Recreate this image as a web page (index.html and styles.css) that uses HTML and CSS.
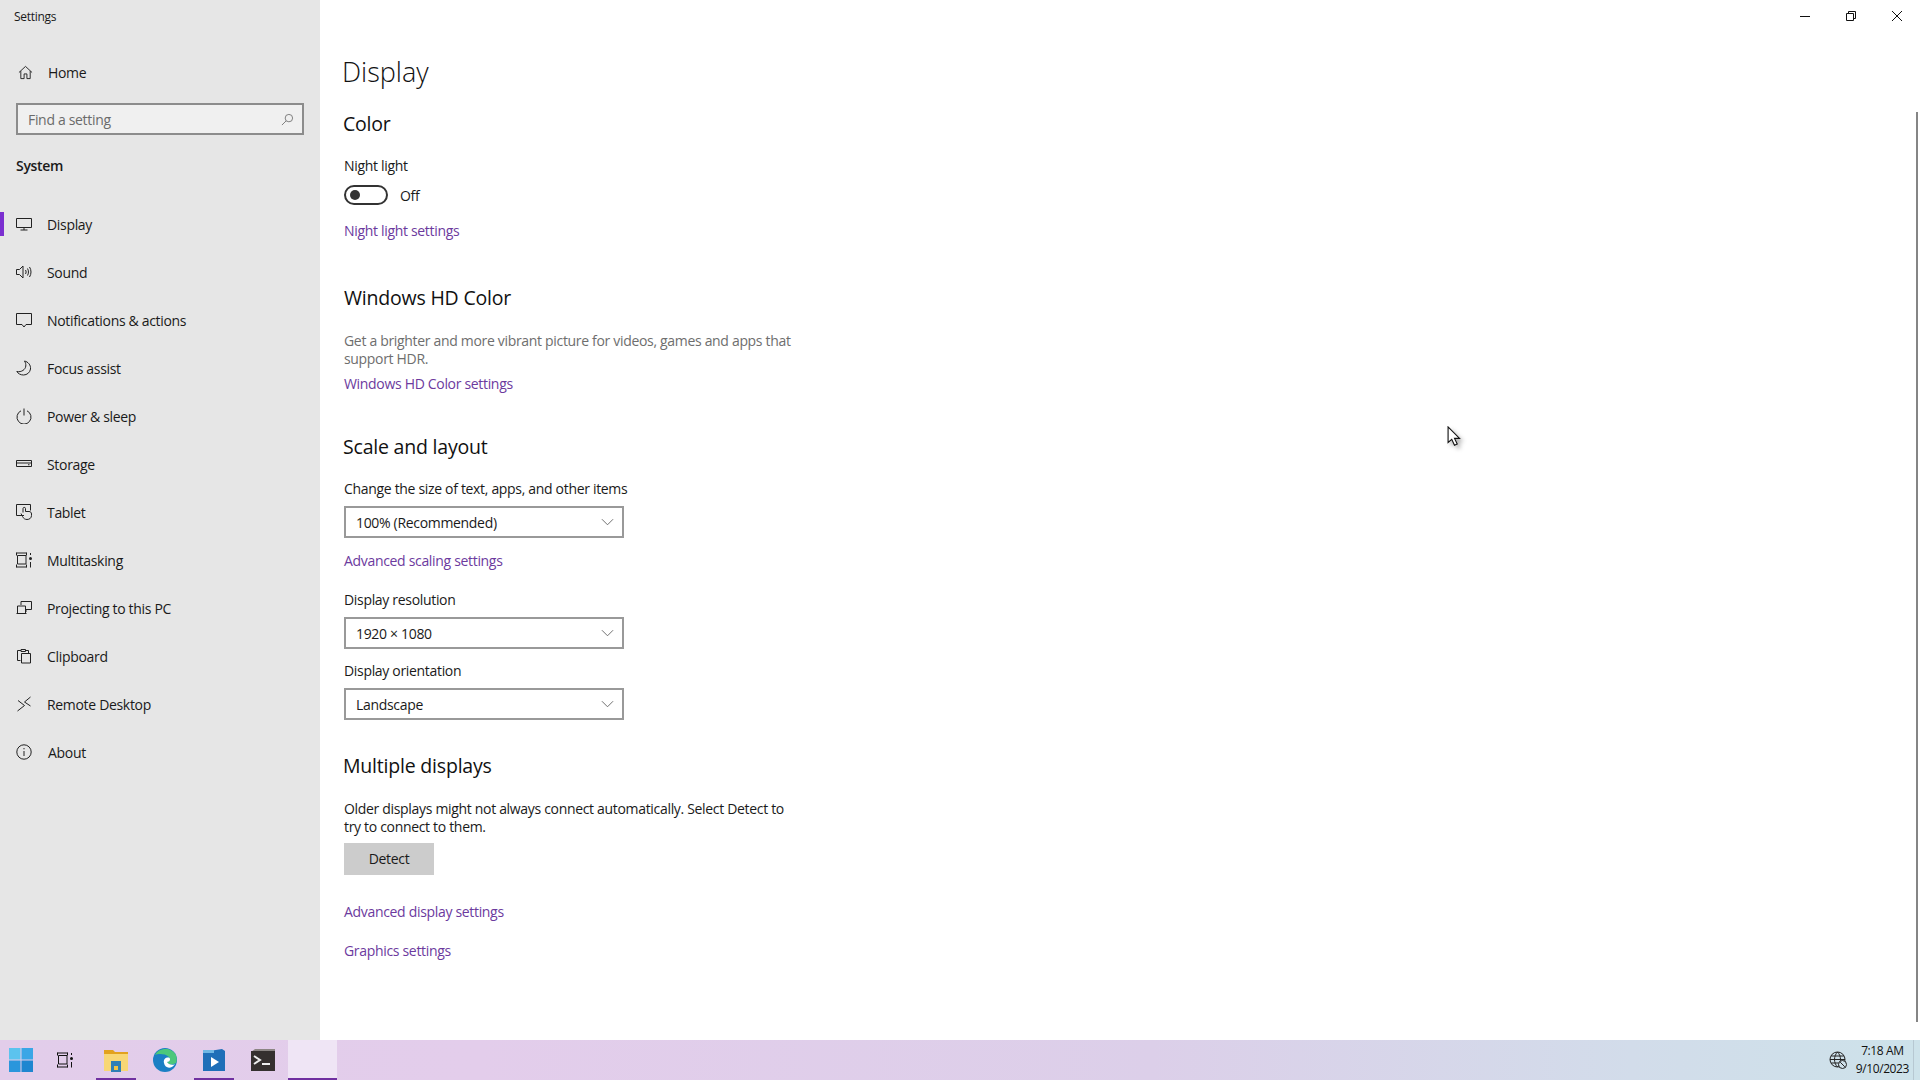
FILE: index.html
```html
<!DOCTYPE html>
<html lang="en">
<head>
<meta charset="utf-8">
<title>Settings</title>
<link rel="stylesheet" href="styles.css">
</head>
<body>
<div class="window">
  <aside class="sidebar">
    <div class="app-title">Settings</div>
    <a class="home-row">
      <svg class="icon" viewBox="0 0 16 16"><path d="M1 8 8 1.500 15 8M3 6.500V14.500H6.500V9.500H9.500V14.500H13V6.500"/></svg>
      <span>Home</span>
    </a>
    <div class="search"><span>Find a setting</span>
      <svg class="search-icon" viewBox="0 0 14 14"><circle cx="8.500" cy="5.500" r="4"/><path d="M5.500 8.500 1 13"/></svg>
    </div>
    <div class="group">System</div>
    <nav class="nav">
      <a class="nav-item active"><svg class="icon" viewBox="0 0 16 16"><path d="M.5 2.500H15.500V11.500H.5ZM8 11.500V14M4.500 14H11.500"/></svg><span>Display</span></a>
      <a class="nav-item"><svg class="icon" viewBox="0 0 16 16"><path d="M.5 5.500H3.500L7 2V14L3.500 10.500H.5ZM9.500 6C10.300 7.300 10.300 8.700 9.500 10M11.500 4.500C12.800 6.500 12.800 9.500 11.500 11.500M13.500 3C15.500 6 15.500 10 13.500 13"/></svg><span>Sound</span></a>
      <a class="nav-item"><svg class="icon" viewBox="0 0 16 16"><path d="M.5 1.500H15.500V12.500H10L8 15 6 12.500H.5Z"/></svg><span>Notifications &amp; actions</span></a>
      <a class="nav-item"><svg class="icon" viewBox="0 0 16 16"><path d="M8.500 1C12 1.800 15 5 14.500 9 14 12.500 11 15 7.500 15 4.500 15 2 13.500.8 11.500 5.500 12.500 9.500 9.500 9.800 6 10 4.200 9.500 2.500 8.500 1Z"/></svg><span>Focus assist</span></a>
      <a class="nav-item"><svg class="icon" viewBox="0 0 16 16"><path d="M5 2.800A7 7 0 1 0 11 2.800M8 .5V7.500"/></svg><span>Power &amp; sleep</span></a>
      <a class="nav-item"><svg class="icon" viewBox="0 0 16 16"><path d="M.5 4.500H15.500V10.500H.5ZM.5 7H15.500M12 8.750H13.500"/></svg><span>Storage</span></a>
      <a class="nav-item"><svg class="icon" viewBox="0 0 16 16"><path d="M8 11.500H.5V.5H14.500V6.500M7 8.500V4.500C7 3 9.500 3 9.500 4.500V7.500H13C14.500 7.500 15.500 8.500 15.500 10V11.500C15.500 14 13.500 15.500 11 15.500 9 15.500 7.500 14.500 6.500 12.500L5 9.500"/></svg><span>Tablet</span></a>
      <a class="nav-item"><svg class="icon" viewBox="0 0 16 16"><path d="M.5 1H10.500M.5 15H10.500M.5 3.500V.5M10.500 3.500V.5M.5 12.500V15.500M10.500 12.500V15.500M1.500 3.500H10V12H1.500ZM14.500 1V3M14.500 10V15.500"/><circle class="solid" cx="14.500" cy="6.500" r="1.500"/></svg><span>Multitasking</span></a>
      <a class="nav-item"><svg class="icon" viewBox="0 0 16 16"><path d="M5 5V1.500H15.500V9.500H10M10 9.500V12M1.500 6H9.500V13.500H1.500ZM.5 13.500H10.500"/></svg><span>Projecting to this PC</span></a>
      <a class="nav-item"><svg class="icon" viewBox="0 0 16 16"><path d="M4.500 12.500H1.500V2.500H5M9.500 2.500H12.500V5M5 3.500V1.500H9.500V3.500ZM5.500 5.500H14.500V15H5.500Z"/></svg><span>Clipboard</span></a>
      <a class="nav-item"><svg class="icon" viewBox="0 0 16 16"><path d="M1.500 15 8.500 9.500 2 4.500M14.500 1 8.500 6 14.500 10"/></svg><span>Remote Desktop</span></a>
      <a class="nav-item about"><svg class="icon" viewBox="0 0 16 16"><circle cx="8" cy="8" r="7.200"/><path d="M8 7V12M8 4V5.300"/></svg><span>About</span></a>
    </nav>
  </aside>
  <main class="main">
    <h1 class="page-title">Display</h1>
    <h2 class="section-title color-title">Color</h2>
    <div class="label night-label">Night light</div>
    <div class="toggle-row"><span class="toggle"><span class="knob"></span></span><span>Off</span></div>
    <a class="link night-link">Night light settings</a>

    <h2 class="section-title hd-title">Windows HD Color</h2>
    <p class="para muted hd-text">Get a brighter and more vibrant picture for videos, games and apps that support HDR.</p>
    <a class="link hd-link">Windows HD Color settings</a>

    <h2 class="section-title scale-title">Scale and layout</h2>
    <div class="label scale-label">Change the size of text, apps, and other items</div>
    <div class="select"><span>100% (Recommended)</span><svg class="chev" viewBox="0 0 14 8"><path d="M1 1 7 7 13 1"/></svg></div>
    <a class="link scale-link">Advanced scaling settings</a>
    <div class="label res-label">Display resolution</div>
    <div class="select"><span>1920 × 1080</span><svg class="chev" viewBox="0 0 14 8"><path d="M1 1 7 7 13 1"/></svg></div>
    <div class="label orient-label">Display orientation</div>
    <div class="select"><span>Landscape</span><svg class="chev" viewBox="0 0 14 8"><path d="M1 1 7 7 13 1"/></svg></div>

    <h2 class="section-title multi-title">Multiple displays</h2>
    <p class="para multi-text">Older displays might not always connect automatically. Select Detect to try to connect to them.</p>
    <div class="button">Detect</div>
    <a class="link adv-link">Advanced display settings</a>
    <a class="link gfx-link">Graphics settings</a>
  </main>
  <div class="track"><div class="thumb"></div></div>
  <div class="caption">
    <svg class="cap" viewBox="0 0 10 10"><path d="M0 5.500H10"/></svg>
    <svg class="cap" viewBox="0 0 10 10"><path d="M.5 2.500H7.500V9.500H.5ZM2.500 2.500V.5H9.500V7.500H7.500"/></svg>
    <svg class="cap" viewBox="0 0 10 10"><path d="M0 0 10 10M10 0 0 10"/></svg>
  </div>
  <svg class="cursor" viewBox="0 0 16 24"><path d="M1 1V18L5 14.500 8 21 11 19.700 8 13.500H13.500Z"/></svg>
</div>
<footer class="taskbar">
  <div class="task-icons">
    <div class="task start"><svg class="t-icon" viewBox="0 0 24 24"><rect class="win1" x="0" y="0" width="11.500" height="11.500"/><rect class="win2" x="12.500" y="0" width="11.500" height="11.500"/><rect class="win3" x="0" y="12.500" width="11.500" height="11.500"/><rect class="win4" x="12.500" y="12.500" width="11.500" height="11.500"/></svg></div>
    <div class="task view"><svg class="t-icon tv" viewBox="0 0 16 16"><path d="M.5 1H10.500M.5 15H10.500M.5 3.500V.5M10.500 3.500V.5M.5 12.500V15.500M10.500 12.500V15.500M1.500 3.500H10V12H1.500ZM14.500 1V3M14.500 10V15.500"/><circle class="solid" cx="14.500" cy="6.500" r="1.500"/></svg></div>
    <div class="task open"><svg class="t-icon" viewBox="0 0 24 24"><path fill="#e2a21e" d="M0 2H9L11 4H24V9H0Z"/><path fill="#f8d775" d="M0 6H24V23H0Z"/><path fill="#2f7fb5" d="M7 13H17V24H7Z"/><rect fill="#f2c443" x="10" y="18" width="4" height="4"/></svg></div>
    <div class="task"><svg class="t-icon edge" viewBox="0 0 24 24"><circle fill="#1b7fc4" cx="12" cy="12" r="12"/><path fill="#4cc77b" d="M2 7C5 0 18-2 23 7 24 10 24 13 23 15 20 17 15 17 14 14 17 14 18 11 16 9 11 5 5 6 2 7Z"/><path fill="#fff" d="M11 15C10 11 13 9 16 9.500 18 11 17 14 14 14 15 16 19 18 22 16 19 21 12 21 11 15Z"/></svg></div>
    <div class="task open"><svg class="t-icon" viewBox="0 0 24 24"><path fill="#1f6fb8" d="M1 4 20 1 23 3V23H1Z"/><path fill="#6fb7e4" d="M1 2H12V5H1Z"/><path fill="#fff" d="M9 9 17 14 9 19Z"/></svg></div>
    <div class="task"><svg class="t-icon" viewBox="0 0 24 24"><path fill="#8b8583" d="M0 4 4 1H24V6H0Z"/><rect fill="#35302f" x="0" y="3" width="24" height="20"/><path class="prompt" d="M3 8 9 12 3 16"/><rect fill="#eee" x="11" y="15" width="8" height="2"/></svg></div>
    <div class="task open blank"></div>
  </div>
  <div class="tray">
    <svg class="globe" viewBox="0 0 18 18"><circle cx="8.500" cy="8.500" r="7.500"/><path d="M1 8.500H16M2 5H15M2 12H15M8.500 1C4.500 5 4.500 12 8.500 16M8.500 1C12.500 5 12.500 12 8.500 16"/><circle class="globe-badge" cx="13.500" cy="13.500" r="4"/><path d="M11.200 11.200 15.800 15.800"/></svg>
    <div class="clock"><div>7:18 AM</div><div>9/10/2023</div></div>
    <div class="show-desktop"></div>
  </div>
</footer>
</body>
</html>
```
FILE: styles.css
```css
* { box-sizing: border-box; }
html, body { margin: 0; padding: 0; }
body {
  width: 1920px; height: 1080px; overflow: hidden; background: #fff;
  font-family: "Open Sans", "Noto Sans", sans-serif; font-size: 14px; color: #1a1a1a;
  letter-spacing: -0.32px;
  display: flex; flex-direction: column;
}
a { display: block; }
.window { flex: 1; display: flex; position: relative; min-height: 0; }

.sidebar { width: 320px; background: #e6e6e6; flex: none; }
.app-title { height: 48px; padding-left: 14px; font-size: 12px; line-height: 33px; letter-spacing: -0.3px; }
.home-row { display: flex; align-items: center; height: 48px; padding-left: 18px; gap: 15px; }
.home-row .icon { width: 15px; height: 15px; }
.icon { width: 16px; height: 16px; fill: none; stroke: #222; stroke-width: 1; flex: none; }
.solid { fill: #222; stroke: none; }
.search {
  display: flex; align-items: center; justify-content: space-between;
  margin: 7px 16px 0 16px; height: 32px; padding: 0 8px 0 10px;
  background: #f0f0f0; border: 2px solid #8c8c8c; color: #6b6b6b;
}
.search-icon { width: 13px; height: 13px; fill: none; stroke: #777; stroke-width: 1; }
.group { margin: 21px 0 0 16px; height: 20px; line-height: 20px; font-weight: 600; }
.nav { margin-top: 24px; }
.nav-item { display: flex; align-items: center; height: 48px; padding-left: 16px; gap: 15px; position: relative; }
.nav-item.active::before { content: ""; position: absolute; left: 0; top: 12px; width: 4px; height: 24px; background: #7b2fd0; }
.about { gap: 16px; }

.main { flex: 1; padding: 0 0 0 24px; min-width: 0; }
.page-title { margin: 52px 0 0 -2px; font-size: 27px; line-height: 40px; height: 40px; font-weight: 300; color: #111; letter-spacing: 0; }
.section-title { font-size: 19.5px; font-weight: 400; line-height: 28px; height: 28px; margin: 0; color: #111; letter-spacing: -0.2px; }
.label, .link { height: 20px; line-height: 20px; }
.color-title { margin-top: 18px; margin-left: -1px; }
.night-label { margin-top: 18px; }
.toggle-row { display: flex; align-items: center; gap: 12px; margin-top: 9px; height: 20px; }
.toggle { width: 44px; height: 20px; border: 2px solid #333; border-radius: 10px; position: relative; display: block; }
.knob { position: absolute; left: 4px; top: 3px; width: 10px; height: 10px; border-radius: 50%; background: #333; }
.link { color: #6c3a9e; }
.night-link { margin-top: 16px; }
.hd-title { margin-top: 43px; }
.para { margin: 0; width: 450px; line-height: 18px; font-size: 14px; }
.muted { color: #6e6e6e; }
.hd-text { margin-top: 20px; }
.hd-link { margin-top: 6px; }
.scale-title { margin-top: 39px; margin-left: -1px; }
.scale-label { margin-top: 18px; }
.select {
  width: 280px; height: 32px; margin-top: 7px; border: 2px solid #999; background: #fff;
  display: flex; align-items: center; justify-content: space-between; padding: 0 8px 0 10px;
}
.chev { width: 13px; height: 8px; fill: none; stroke: #666; stroke-width: 1; }
.scale-link { margin-top: 13px; }
.res-label { margin-top: 19px; }
.orient-label { margin-top: 12px; }
.multi-title { margin-top: 32px; margin-left: -1px; }
.multi-text { margin-top: 20px; }
.button { width: 90px; height: 32px; margin-top: 7px; background: #ccc; text-align: center; line-height: 32px; }
.adv-link { margin-top: 27px; }
.gfx-link { margin-top: 19px; }

.track { width: 4px; flex: none; padding-top: 112px; }
.thumb { width: 2px; height: 910px; background: #858585; }
.caption { position: absolute; top: 11px; right: 18px; display: flex; gap: 36px; }
.cap { width: 10px; height: 10px; fill: none; stroke: #111; stroke-width: 1; display: block; }
.cursor { position: absolute; left: 1447px; top: 426px; width: 15px; height: 22px; fill: #fff; stroke: #111; stroke-width: 1.2; filter: drop-shadow(3px 3px 2px rgba(0,0,0,.3)); }

.taskbar {
  height: 40px; flex: none; display: flex; justify-content: space-between; align-items: stretch;
  background: linear-gradient(90deg, #e2cdea 0%, #e3cdeb 25%, #dccfe9 60%, #d2dcea 85%, #cde2ea 100%);
}
.task-icons { display: flex; }
.task { width: 49px; height: 40px; display: flex; align-items: center; justify-content: center; position: relative; }
.task.start { width: 42px; }
.task.view { width: 46px; margin-right: 3.5px; }
.task.open::after { content: ""; position: absolute; left: 4px; right: 5px; bottom: 0; height: 2px; background: #7030a0; }
.task.blank { background: #efe5f5; }
.task.blank::after { left: 0; right: 0; }
.t-icon { width: 24px; height: 24px; display: block; }
.tv { width: 16px; height: 16px; fill: none; stroke: #111; stroke-width: 1; }
.tv .solid { fill: #111; }
.win1 { fill: #5cc3ee; } .win2 { fill: #3aa6e6; } .win3 { fill: #2a96dc; } .win4 { fill: #1f86d0; }
.prompt { fill: none; stroke: #eee; stroke-width: 2; }
.tray { display: flex; align-items: center; }
.globe { width: 18px; height: 18px; fill: none; stroke: #222; stroke-width: 1; margin-right: 9px; }
.globe-badge { fill: #cfe0ea; stroke: #222; }
.clock { font-size: 12px; line-height: 18px; text-align: center; color: #111; letter-spacing: -0.4px; margin-right: 4px; }
.show-desktop { width: 1px; height: 100%; margin-right: 6px; background: #b7c8d2; }
```
